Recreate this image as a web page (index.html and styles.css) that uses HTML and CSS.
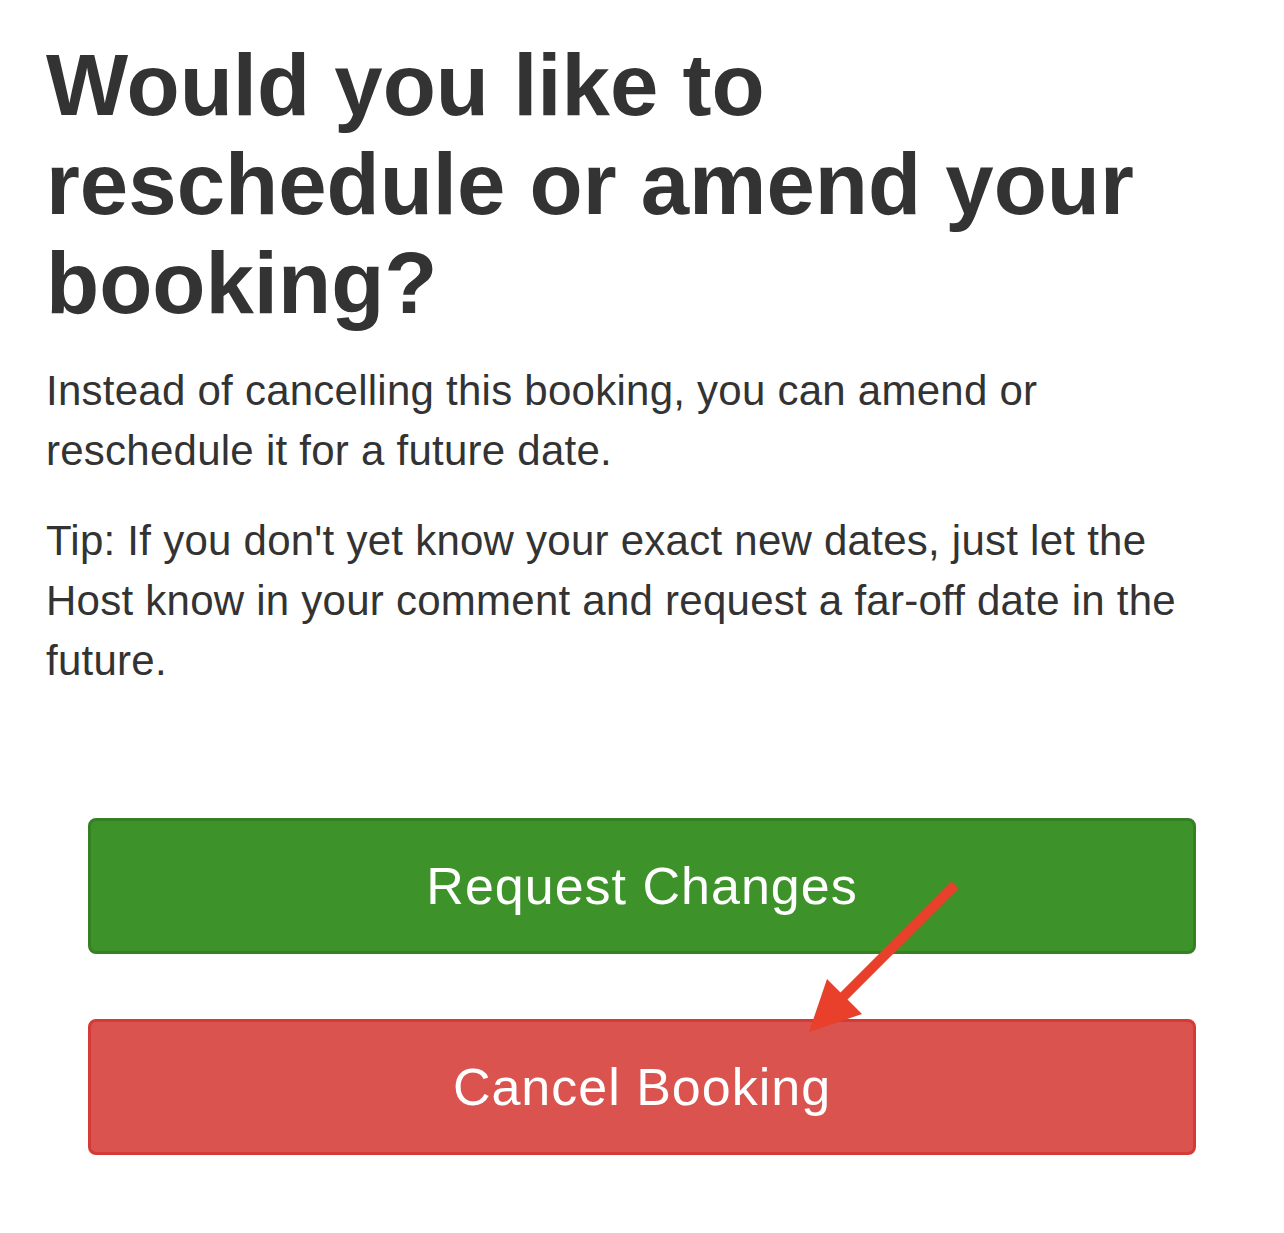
FILE: index.html
```html
<!DOCTYPE html>
<html lang="en">
<head>
<meta charset="utf-8">
<title>Reschedule or amend your booking</title>
<link rel="stylesheet" href="styles.css">
</head>
<body>
<main class="page">
  <h1 class="title">Would you like to reschedule or amend your booking?</h1>
  <p class="text">Instead of cancelling this booking, you can amend or reschedule it for a future date.</p>
  <p class="text">Tip: If you don't yet know your exact new dates, just let the Host know in your comment and request a far-off date in the future.</p>
  <div class="actions">
    <button class="btn btn-green" type="button">Request Changes</button>
    <button class="btn btn-red" type="button">Cancel Booking</button>
  </div>
  <svg class="arrow" width="1284" height="1233" viewBox="0 0 1284 1233" aria-hidden="true">
    <line x1="955" y1="885" x2="840" y2="1000" stroke="#e8402a" stroke-width="10" stroke-linecap="butt"/>
    <polygon points="809,1032 827,979 862,1014" fill="#e8402a"/>
  </svg>
</main>
</body>
</html>
```

FILE: styles.css
```css
html, body {
  margin: 0;
  padding: 0;
  background: #ffffff;
}

.page {
  position: relative;
  padding: 35px 46px 0 46px;
  min-height: 1233px;
  box-sizing: border-box;
  font-family: "Liberation Sans", Arial, Helvetica, sans-serif;
  color: #333333;
}

.title {
  margin: 0 0 29px 0;
  font-size: 87px;
  line-height: 99px;
  font-weight: bold;
  color: #333333;
}

.text {
  max-width: 1150px;
  margin: 0 0 30px 0;
  font-size: 42px;
  line-height: 60px;
  letter-spacing: 0.25px;
}

.actions {
  display: flex;
  flex-direction: column;
  gap: 65px;
  margin: 127px 42px 0 42px;
}

.btn {
  display: block;
  width: 100%;
  height: 136px;
  border-radius: 8px;
  border: 3px solid transparent;
  color: #ffffff;
  font-family: "Liberation Sans", Arial, Helvetica, sans-serif;
  font-size: 52px;
  letter-spacing: 1px;
  line-height: 1;
  text-align: center;
  padding: 0;
  cursor: pointer;
}

.btn-green {
  background: #3e922a;
  border-color: #367f25;
}

.btn-red {
  background: #da534f;
  border-color: #d43a36;
}

.arrow {
  position: absolute;
  left: 0;
  top: 0;
  pointer-events: none;
}
```
